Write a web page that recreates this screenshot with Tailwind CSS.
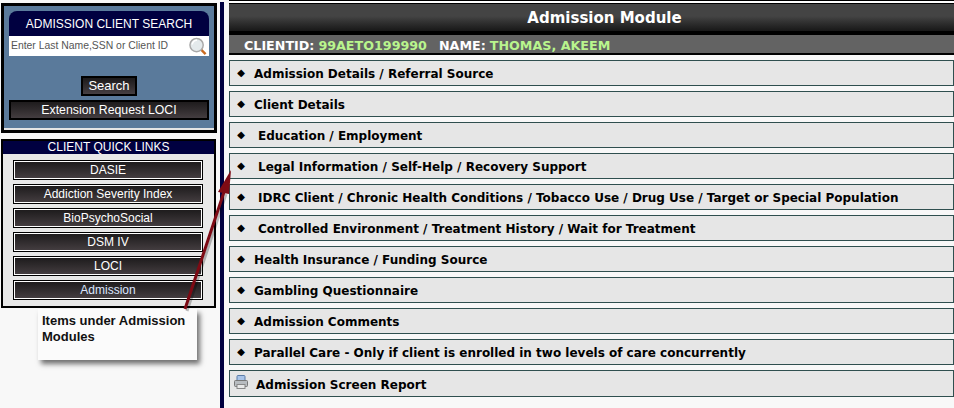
<!DOCTYPE html>
<html lang="en">
<head>
    <meta charset="UTF-8">
    <title>Admission Module</title>
    <script src="https://cdn.jsdelivr.net/npm/@tailwindcss/browser@4"></script>
</head>
<body class="bg-[#f8f8f8] overflow-hidden">
<div class="relative flex w-[954px] h-[408px] font-['Liberation_Sans',sans-serif]">

    <!-- left column -->
    <div class="w-[220px] shrink-0 pt-[3px] pl-px">
        <div class="w-[216px] h-[130px] border-[3px] border-black bg-[#e4e4e4] pb-[2px]">
            <div class="h-[122px] bg-[#5a7a9b] px-[5px] pt-[5px] flex flex-col">
                <div class="h-[25px] bg-[#000040] rounded-t-[8px] text-white text-[12px] flex items-center justify-center pt-[1px]">ADMISSION CLIENT SEARCH</div>
                <div class="h-[20px] bg-white flex items-center justify-between pl-[2px] pr-px text-[#555] text-[10.4px]">
                    <span>Enter Last Name,SSN or Client ID</span>
                    <svg class="w-[20px] h-[19px]" viewBox="0 0 20 20">
                        <line x1="12" y1="12" x2="18" y2="18" stroke="#c96a20" stroke-width="2.5"/>
                        <circle cx="8.5" cy="8.5" r="7" fill="#e4eaec" stroke="#a8a8a8" stroke-width="1.5"/>
                        <path d="M4 8 A4.5 4.5 0 0 1 9 3.5" fill="none" stroke="#fff" stroke-width="1.5"/>
                    </svg>
                </div>
                <div class="flex justify-center mt-[20px]">
                    <div class="w-[56px] h-[20px] border-2 border-black bg-gradient-to-b from-[#1c1a1b] to-[#463f42] text-white text-[13px] flex items-center justify-center">Search</div>
                </div>
                <div class="mt-[4px] h-[20px] border border-black outline-1 outline-black -outline-offset-2 bg-gradient-to-b from-[#1c1a1b] to-[#463f42] text-white text-[12.3px] flex items-center justify-center">Extension Request LOCI</div>
            </div>
        </div>

        <div class="mt-[6px] w-[215px] h-[169px] border-[2px] border-black bg-[#e8e8e8] flex flex-col">
            <div class="h-[13px] bg-[#000040] text-white text-[12px] leading-[13px] text-center">CLIENT QUICK LINKS</div>
            <div class="flex flex-col gap-[4px] pl-[10px] pt-[6px]">
                <div class="w-[190px] h-[20px] border border-black outline-1 outline-white -outline-offset-2 bg-gradient-to-b from-[#1c1a1b] to-[#463f42] text-white text-[12px] flex items-center justify-center">DASIE</div>
                <div class="w-[190px] h-[20px] border border-black outline-1 outline-white -outline-offset-2 bg-gradient-to-b from-[#1c1a1b] to-[#463f42] text-white text-[12px] flex items-center justify-center">Addiction Severity Index</div>
                <div class="w-[190px] h-[20px] border border-black outline-1 outline-white -outline-offset-2 bg-gradient-to-b from-[#1c1a1b] to-[#463f42] text-white text-[12px] flex items-center justify-center">BioPsychoSocial</div>
                <div class="w-[190px] h-[20px] border border-black outline-1 outline-white -outline-offset-2 bg-gradient-to-b from-[#1c1a1b] to-[#463f42] text-white text-[12px] flex items-center justify-center">DSM IV</div>
                <div class="w-[190px] h-[20px] border border-black outline-1 outline-white -outline-offset-2 bg-gradient-to-b from-[#1c1a1b] to-[#463f42] text-white text-[12px] flex items-center justify-center">LOCI</div>
                <div class="w-[190px] h-[20px] border border-black outline-1 outline-white -outline-offset-2 bg-gradient-to-b from-[#1c1a1b] to-[#463f42] text-[#dbe6ff] text-[12px] flex items-center justify-center">Admission</div>
            </div>
        </div>
    </div>

    <!-- divider -->
    <div class="w-[4px] shrink-0 bg-[#000040] mt-[2px]"></div>

    <!-- main -->
    <div class="flex-1 min-w-0 pl-[5px] font-['DejaVu_Sans',sans-serif]">
        <div class="h-[1px] bg-black"></div>
        <div class="h-[2px] bg-white"></div>
        <div class="h-[28px] border-t border-black bg-gradient-to-b from-[#444] from-45% to-[#181818] text-white text-[15px] font-bold flex items-center justify-center pl-[26px] pt-[2px]">Admission Module</div>
        <div class="h-[24px] border-t-[4px] border-b-[2px] border-black bg-[#636363] text-[12.7px] font-bold text-white flex items-center pl-[15px] pt-[3px]">
            <span>CLIENTID:</span><span class="ml-[4px] text-[#b9f58d]">99AETO199990</span><span class="ml-[12px]">NAME:</span><span class="ml-[4px] text-[#b9f58d]">THOMAS, AKEEM</span>
        </div>

        <div class="flex flex-col gap-[5px] mt-[5px] text-[12px] font-bold text-black">
            <div class="h-[26px] border border-[#2f4f4f] bg-[#e6e6e6] flex items-center pt-[2px]"><span class="w-[24px] pr-[2px] pb-[4px] text-center text-[10px]">◆</span>Admission Details / Referral Source</div>
            <div class="h-[26px] border border-[#2f4f4f] bg-[#e6e6e6] flex items-center pt-[2px]"><span class="w-[24px] pr-[2px] pb-[4px] text-center text-[10px]">◆</span>Client Details</div>
            <div class="h-[26px] border border-[#2f4f4f] bg-[#e6e6e6] flex items-center pt-[2px]"><span class="w-[28px] pr-[6px] pb-[4px] text-center text-[10px]">◆</span>Education / Employment</div>
            <div class="h-[26px] border border-[#2f4f4f] bg-[#e6e6e6] flex items-center pt-[2px]"><span class="w-[28px] pr-[6px] pb-[4px] text-center text-[10px]">◆</span>Legal Information / Self-Help / Recovery Support</div>
            <div class="h-[26px] border border-[#2f4f4f] bg-[#e6e6e6] flex items-center pt-[2px]"><span class="w-[28px] pr-[6px] pb-[4px] text-center text-[10px]">◆</span>IDRC Client / Chronic Health Conditions / Tobacco Use / Drug Use / Target or Special Population</div>
            <div class="h-[26px] border border-[#2f4f4f] bg-[#e6e6e6] flex items-center pt-[2px]"><span class="w-[28px] pr-[6px] pb-[4px] text-center text-[10px]">◆</span>Controlled Environment / Treatment History / Wait for Treatment</div>
            <div class="h-[26px] border border-[#2f4f4f] bg-[#e6e6e6] flex items-center pt-[2px]"><span class="w-[24px] pr-[2px] pb-[4px] text-center text-[10px]">◆</span>Health Insurance / Funding Source</div>
            <div class="h-[26px] border border-[#2f4f4f] bg-[#e6e6e6] flex items-center pt-[2px]"><span class="w-[24px] pr-[2px] pb-[4px] text-center text-[10px]">◆</span>Gambling Questionnaire</div>
            <div class="h-[26px] border border-[#2f4f4f] bg-[#e6e6e6] flex items-center pt-[2px]"><span class="w-[24px] pr-[2px] pb-[4px] text-center text-[10px]">◆</span>Admission Comments</div>
            <div class="h-[26px] border border-[#2f4f4f] bg-[#e6e6e6] flex items-center pt-[2px]"><span class="w-[24px] pr-[2px] pb-[4px] text-center text-[10px]">◆</span>Parallel Care - Only if client is enrolled in two levels of care concurrently</div>
            <div class="h-[27px] border border-[#2f4f4f] bg-[#e6e6e6] flex items-center pt-[2px]">
                <svg class="w-[14px] h-[14px] ml-[4px] mr-[8px] mb-[5px] shrink-0" viewBox="0 0 14 14">
                    <rect x="3" y="0.5" width="8" height="6" rx="1" fill="#a9c4e8" stroke="#5b7ca8"/>
                    <rect x="0.5" y="5.5" width="13" height="6" rx="1" fill="#b8bcc0" stroke="#777"/>
                    <rect x="3" y="9.5" width="8" height="4" fill="#e8e8e8" stroke="#888"/>
                </svg>
                Admission Screen Report
            </div>
        </div>
    </div>

    <!-- annotation callout -->
    <div class="absolute left-[38px] top-[309px] w-[159px] h-[51px] bg-[#fbfbfb] shadow-[3px_4px_5px_rgba(0,0,0,0.55)] px-[4px] pt-[4px] text-[13px] leading-[16px] font-bold text-[#111]">Items under Admission Modules</div>

    <svg class="absolute left-0 top-0 pointer-events-none" width="954" height="408">
        <line x1="185" y1="309" x2="224" y2="192" stroke="#000" stroke-opacity="0.25" stroke-width="3" transform="translate(2 2)"/>
        <line x1="185" y1="309" x2="224" y2="192" stroke="#7d0a14" stroke-width="3"/>
        <polygon points="231,170 218,192 229,194" fill="#7d0a14"/>
    </svg>
</div>
</body>
</html>
